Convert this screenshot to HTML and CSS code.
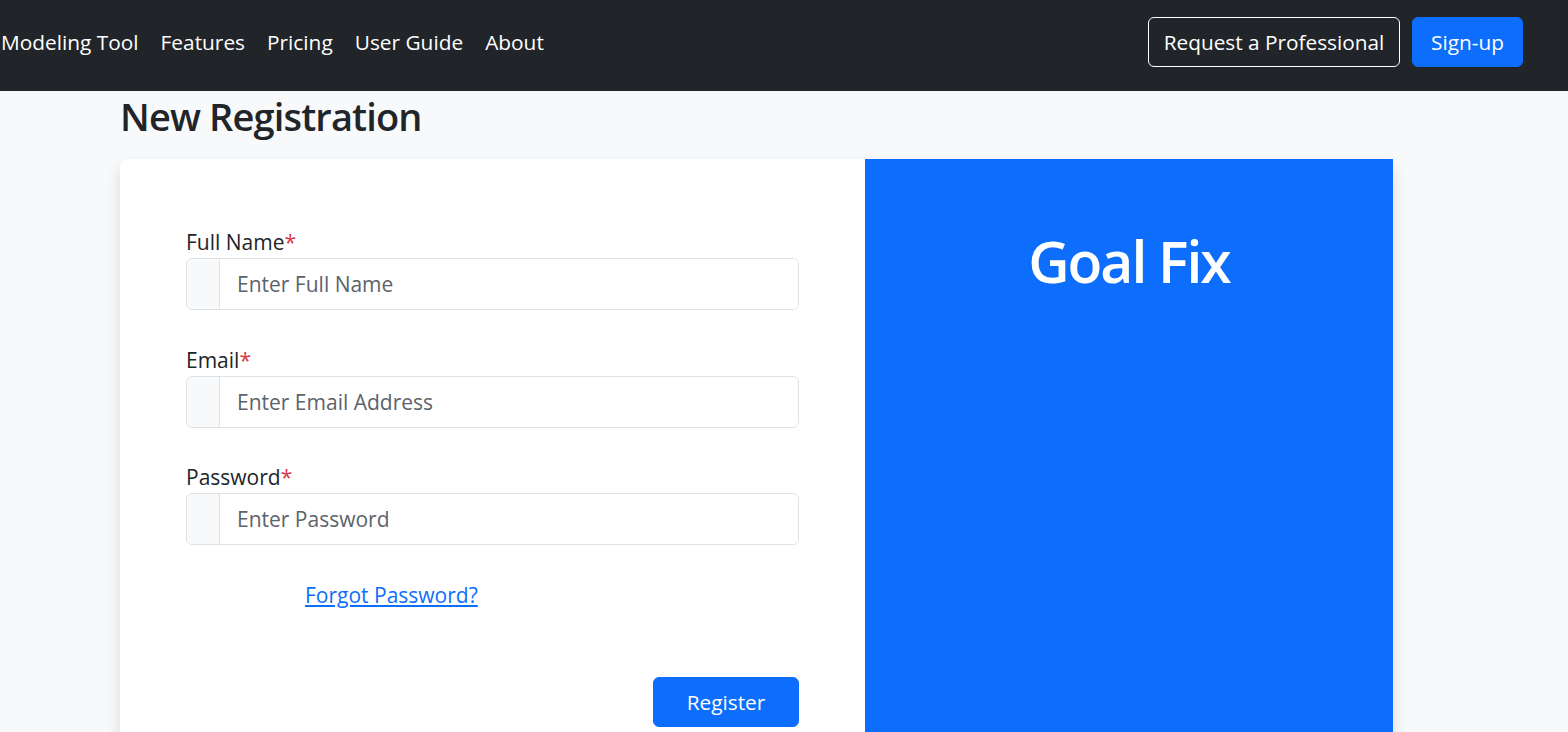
FILE: index.html
```html
<!DOCTYPE html>
<html lang="en">
<head>
<meta charset="utf-8">
<title>New Registration</title>
<link rel="stylesheet" href="styles.css">
</head>
<body>
<nav class="navbar">
  <ul class="nav-links">
    <li><a href="#">Modeling Tool</a></li>
    <li><a href="#">Features</a></li>
    <li><a href="#">Pricing</a></li>
    <li><a href="#">User Guide</a></li>
    <li><a href="#">About</a></li>
  </ul>
  <div class="nav-actions">
    <button class="btn btn-outline">Request a Professional</button>
    <button class="btn btn-primary">Sign-up</button>
  </div>
</nav>
<main class="container">
  <h1 class="page-title">New Registration</h1>
  <div class="card">
    <section class="card-form">
      <form class="form">
        <div class="field">
          <label class="label">Full Name<span class="req">*</span></label>
          <div class="input-group">
            <span class="addon"></span>
            <input class="input" type="text" placeholder="Enter Full Name">
          </div>
        </div>
        <div class="field">
          <label class="label">Email<span class="req">*</span></label>
          <div class="input-group">
            <span class="addon"></span>
            <input class="input" type="email" placeholder="Enter Email Address">
          </div>
        </div>
        <div class="field">
          <label class="label">Password<span class="req">*</span></label>
          <div class="input-group">
            <span class="addon"></span>
            <input class="input" type="password" placeholder="Enter Password">
          </div>
        </div>
        <div class="forgot-row"><a class="forgot" href="#">Forgot Password?</a></div>
        <div class="submit-row"><button class="btn btn-primary btn-register" type="button">Register</button></div>
      </form>
    </section>
    <section class="card-brand">
      <h2 class="brand-title">Goal Fix</h2>
    </section>
  </div>
</main>
</body>
</html>
```

FILE: styles.css
```css
* { box-sizing: border-box; }
html, body { margin: 0; padding: 0; }
body {
  font-family: "Open Sans", "Noto Sans", "Liberation Sans", sans-serif;
  background: #f8f9fa;
  color: #212529;
  overflow: hidden;
}
.navbar {
  height: 91px;
  background: #212529;
  display: flex;
  align-items: center;
  justify-content: space-between;
  padding: 0 45px 8px 1px;
}
.nav-links {
  list-style: none;
  display: flex;
  gap: 22px;
  margin: 0;
  padding: 0;
}
.nav-links a {
  color: #fff;
  text-decoration: none;
  font-size: 20.85px;
}
.nav-actions {
  display: flex;
  gap: 12px;
  align-items: center;
}
.btn {
  font-family: inherit;
  font-size: 20.8px;
  height: 50px;
  border-radius: 6px;
  cursor: pointer;
  color: #fff;
  padding: 0;
}
.btn-outline {
  background: transparent;
  border: 1px solid #fff;
  width: 252px;
}
.btn-primary {
  background: #0d6efd;
  border: 1px solid #0d6efd;
  width: 111px;
}
.container {
  width: 1273px;
  margin-left: 120px;
}
.page-title {
  font-size: 38px;
  font-weight: 600;
  letter-spacing: -0.85px;
  margin: 0;
  height: 68px;
  line-height: 50px;
  padding-left: 0;
}
.card {
  display: flex;
  background: #fff;
  border-radius: 8px 0 0 0;
  box-shadow: 0 8px 16px rgba(0, 0, 0, 0.12);
  height: 600px;
}
.card-form {
  width: 745px;
  padding: 68px 66px 0 66px;
}
.card-brand {
  width: 528px;
  background: #0d6efd;
  text-align: center;
}
.brand-title {
  margin: 62px 0 0;
  color: #fff;
  font-size: 57px;
  line-height: 80px;
  font-weight: 600;
  letter-spacing: -2px;
}
.form { display: flex; flex-direction: column; }
.field { margin-bottom: 34.5px; }
.label {
  display: block;
  font-size: 21px;
  line-height: 31px;
}
.req { color: #dc3545; }
.input-group {
  display: flex;
  height: 52px;
  border: 1px solid #dee2e6;
  border-radius: 6px;
  overflow: hidden;
}
.addon {
  width: 33px;
  background: #f8f9fa;
  border-right: 1px solid #dee2e6;
}
.input {
  flex: 1;
  min-width: 0;
  border: 0;
  outline: none;
  font-family: inherit;
  font-size: 21px;
  padding: 0 17px;
  color: #212529;
  background: #fff;
}
.input::placeholder { color: #5c636a; }
.forgot-row {
  padding-left: 119px;
  margin-top: 1px;
  height: 96px;
}
.forgot {
  color: #0d6efd;
  font-size: 21px;
  text-decoration: underline;
}
.submit-row { display: flex; justify-content: flex-end; }
.btn-register { width: 146px; }
```
